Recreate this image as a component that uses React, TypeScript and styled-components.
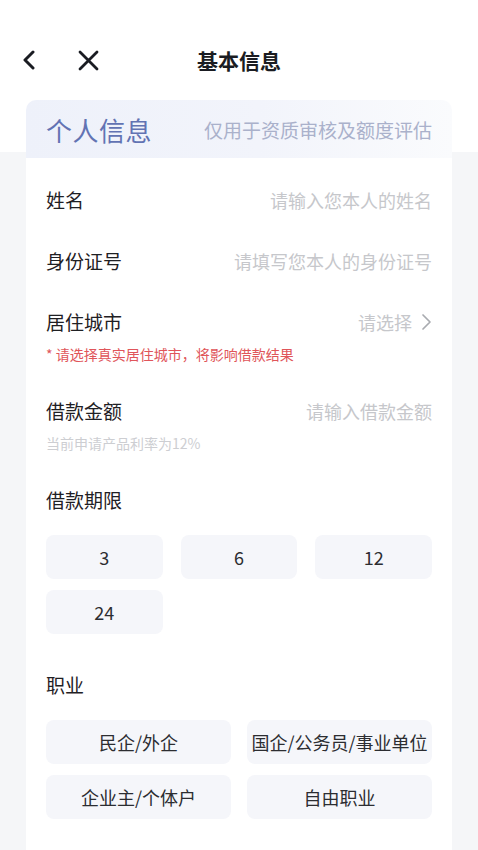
import styled, { createGlobalStyle } from 'styled-components';

const GlobalStyle = createGlobalStyle`
    html, body {
        margin: 0;
        padding: 0;
        background: #f5f6f8;
    }
    * {
        box-sizing: border-box;
    }
    body {
        font-family: 'Noto Sans CJK SC', 'Noto Sans', sans-serif;
    }
`;

const TERMS = ['3', '6', '12', '24'];
const JOBS = ['民企/外企', '国企/公务员/事业单位', '企业主/个体户', '自由职业'];

const App = () => {
    return (
        <Page>
            <GlobalStyle />
            <NavBar>
                <NavButton aria-label="back">
                    <svg width="14" height="20" viewBox="0 0 14 20" fill="none">
                        <path d="M11 2L3 10L11 18" stroke="#1a1c22" strokeWidth="3" strokeLinecap="round" strokeLinejoin="round" />
                    </svg>
                </NavButton>
                <NavButton aria-label="close">
                    <svg width="21" height="21" viewBox="0 0 21 21" fill="none">
                        <path d="M2 2L19 19M19 2L2 19" stroke="#1a1c22" strokeWidth="2.8" strokeLinecap="round" />
                    </svg>
                </NavButton>
                <NavTitle>基本信息</NavTitle>
            </NavBar>

            <Card>
                <CardHead>
                    <CardTitle>个人信息</CardTitle>
                    <CardSub>仅用于资质审核及额度评估</CardSub>
                </CardHead>

                <CardBody>
                    <Field>
                        <FieldRow>
                            <Label>姓名</Label>
                            <Placeholder>请输入您本人的姓名</Placeholder>
                        </FieldRow>
                    </Field>

                    <Field>
                        <FieldRow>
                            <Label>身份证号</Label>
                            <Placeholder>请填写您本人的身份证号</Placeholder>
                        </FieldRow>
                    </Field>

                    <Field>
                        <FieldRow>
                            <Label>居住城市</Label>
                            <Placeholder>
                                请选择
                                <svg width="12" height="18" viewBox="0 0 12 18" fill="none">
                                    <path d="M3 2L10 9L3 16" stroke="#a9abb0" strokeWidth="1.7" strokeLinecap="round" strokeLinejoin="round" />
                                </svg>
                            </Placeholder>
                        </FieldRow>
                        <Hint warn>* 请选择真实居住城市，将影响借款结果</Hint>
                    </Field>

                    <Field>
                        <FieldRow>
                            <Label>借款金额</Label>
                            <Placeholder>请输入借款金额</Placeholder>
                        </FieldRow>
                        <Hint>当前申请产品利率为12%</Hint>
                    </Field>

                    <Field>
                        <Label>借款期限</Label>
                        <OptionGrid cols={3} gapX={18}>
                            {TERMS.map((t) => (
                                <OptionButton key={t}>{t}</OptionButton>
                            ))}
                        </OptionGrid>
                    </Field>

                    <Field extraTop={3}>
                        <Label>职业</Label>
                        <OptionGrid cols={2} gapX={16}>
                            {JOBS.map((j) => (
                                <OptionButton key={j}>{j}</OptionButton>
                            ))}
                        </OptionGrid>
                    </Field>
                </CardBody>
            </Card>
        </Page>
    );
};

export default App;

const Page = styled.div`
    width: 478px;
    min-height: 850px;
    background: linear-gradient(#ffffff 0, #ffffff 152px, #f5f6f8 152px);
    display: flex;
    flex-direction: column;
`;

const NavBar = styled.div`
    position: relative;
    display: flex;
    align-items: center;
    gap: 42px;
    height: 48px;
    margin-top: 36px;
    padding-left: 22px;
`;

const NavButton = styled.button`
    display: flex;
    align-items: center;
    justify-content: center;
    padding: 0;
    border: none;
    background: transparent;
    cursor: pointer;
`;

const NavTitle = styled.div`
    position: absolute;
    left: 0;
    right: 0;
    top: 0;
    bottom: 0;
    display: flex;
    align-items: center;
    justify-content: center;
    pointer-events: none;
    font-size: 21px;
    font-weight: 700;
    color: #1a1c22;
`;

const Card = styled.div`
    flex: 1;
    margin: 16px 26px 0;
    background: #ffffff;
    border-radius: 10px 10px 0 0;
    display: flex;
    flex-direction: column;
`;

const CardHead = styled.div`
    display: flex;
    align-items: center;
    justify-content: space-between;
    height: 58px;
    padding: 0 20px;
    border-radius: 10px 10px 0 0;
    background: linear-gradient(90deg, #eef1fa 0%, #f2f4fb 55%, #fafbfd 100%);
`;

const CardTitle = styled.div`
    font-size: 26px;
    color: #6273b3;
    letter-spacing: 0.5px;
`;

const CardSub = styled.div`
    font-size: 19px;
    color: #aab1cb;
`;

const CardBody = styled.div`
    display: flex;
    flex-direction: column;
    gap: 35px;
    padding: 29px 20px 30px;
`;

const Field = styled.div<{ extraTop?: number }>`
    display: flex;
    flex-direction: column;
    margin-top: ${({ extraTop }) => extraTop ?? 0}px;
`;

const FieldRow = styled.div`
    display: flex;
    align-items: center;
    justify-content: space-between;
    height: 26px;
`;

const Label = styled.div`
    font-size: 19px;
    line-height: 26px;
    color: #1f2024;
`;

const Placeholder = styled.div`
    display: flex;
    align-items: center;
    gap: 8px;
    font-size: 18px;
    color: #c6c7cb;
`;

const Hint = styled.div<{ warn?: boolean }>`
    margin-top: 10px;
    font-size: 14px;
    line-height: 18px;
    color: ${({ warn }) => (warn ? '#e0555a' : '#cdced2')};
`;

const OptionGrid = styled.div<{ cols: number; gapX: number }>`
    display: grid;
    grid-template-columns: repeat(${({ cols }) => cols}, 1fr);
    column-gap: ${({ gapX }) => gapX}px;
    row-gap: 11px;
    margin-top: 22px;
`;

const OptionButton = styled.button`
    height: 44px;
    padding: 0;
    border: none;
    border-radius: 8px;
    background: #f5f6fa;
    font-family: 'Noto Sans CJK SC', 'Noto Sans', sans-serif;
    font-size: 18px;
    color: #2c2d31;
    white-space: nowrap;
    cursor: pointer;
`;
